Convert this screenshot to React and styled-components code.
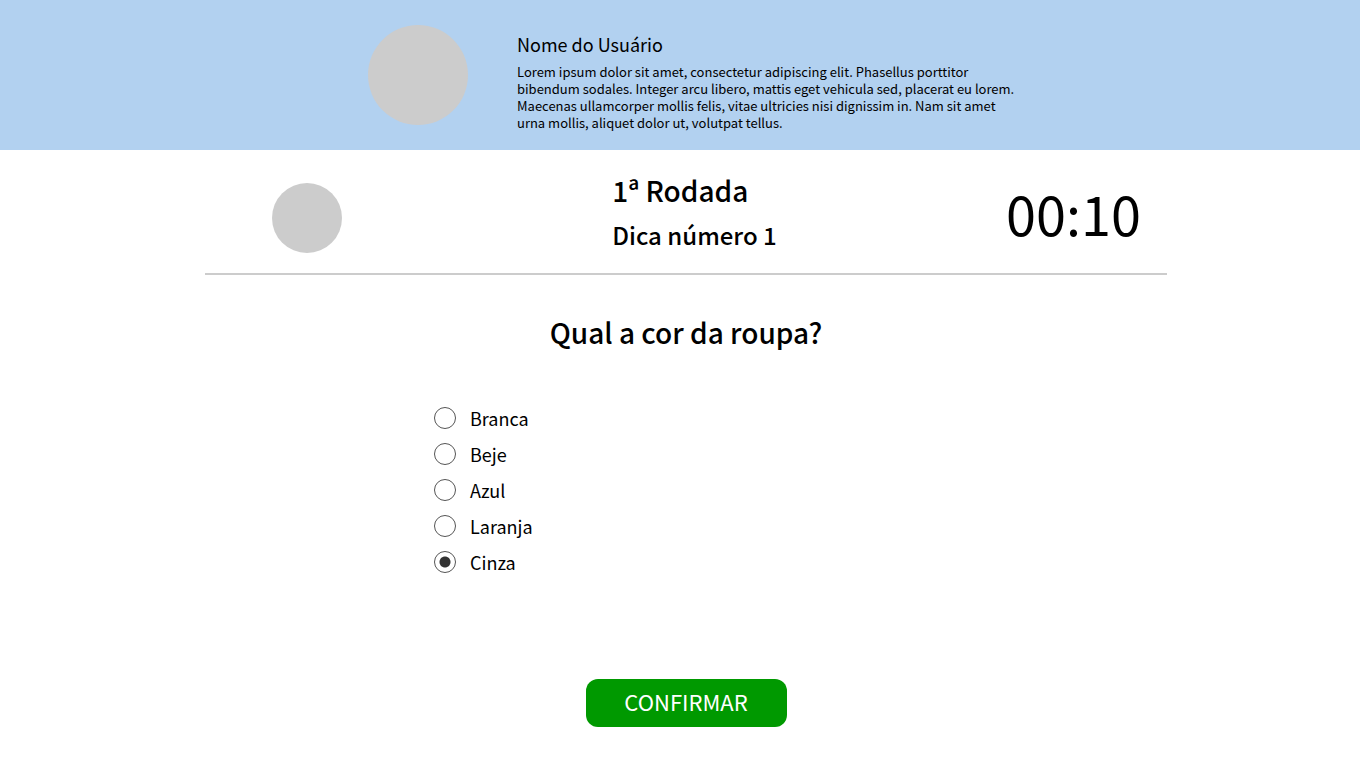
import React, { useState } from "react";
import styled, { createGlobalStyle } from "styled-components";

const GlobalStyle = createGlobalStyle`
  *, *::before, *::after { box-sizing: border-box; }
  body {
    margin: 0;
    background: #fff;
    color: #000;
    font-family: "Noto Sans CJK JP", "Noto Sans", sans-serif;
  }
  h1, h2, p, fieldset { margin: 0; padding: 0; border: 0; }
`;

const Header = styled.header`
  min-height: 150px;
  padding: 25px 0 0 36px;
  background: #b2d1f0;
`;

const Profile = styled.div`
  display: flex;
  gap: 49px;
  max-width: 660px;
  margin: 0 auto;
`;

const Avatar = styled.div`
  flex: none;
  width: ${(p) => p.$size}px;
  height: ${(p) => p.$size}px;
  border-radius: 50%;
  background: #ccc;
`;

const UserInfo = styled.div`
  flex: 1;
  padding-top: 7px;
`;

const UserName = styled.h2`
  font-size: 18px;
  font-weight: 400;
  line-height: 24px;
`;

const Bio = styled.p`
  margin-top: 7px;
  font-size: 13px;
  line-height: 17px;
`;

const Main = styled.main`
  padding-left: 12px;
`;

const Content = styled.form`
  display: flex;
  flex-direction: column;
  max-width: 962px;
  margin: 0 auto;
`;

const StatusBar = styled.div`
  display: grid;
  grid-template-columns: 1fr auto 1fr;
  align-items: end;
  padding: 22px 26px 20px 67px;
  border-bottom: 2px solid #ccc;
`;

const Round = styled.div`
  display: flex;
  flex-direction: column;
  gap: 9px;
  padding-right: 24px;
`;

const RoundTitle = styled.h1`
  font-size: 28px;
  font-weight: 500;
  line-height: 36px;
`;

const Hint = styled.p`
  font-size: 24px;
  font-weight: 500;
  line-height: 36px;
`;

const Timer = styled.time`
  justify-self: end;
  font-size: 54px;
  line-height: 80px;
`;

const Question = styled.h2`
  margin-top: 36px;
  font-size: 28px;
  font-weight: 500;
  line-height: 42px;
  text-align: center;
`;

const Options = styled.fieldset`
  display: flex;
  flex-direction: column;
  align-items: flex-start;
  margin: 47px 0 0 229px;
`;

const Option = styled.label`
  display: flex;
  align-items: center;
  gap: 14px;
  font-size: 18px;
  line-height: 36px;
  cursor: pointer;
`;

const Radio = styled.input`
  appearance: none;
  width: 22px;
  height: 22px;
  margin: 0;
  border: 1px solid #555;
  border-radius: 50%;
  background: #fff;

  &:checked {
    background: radial-gradient(circle, #333 5px, #fff 6px);
  }
`;

const ConfirmButton = styled.button`
  align-self: center;
  width: 201px;
  height: 48px;
  margin-top: 99px;
  padding: 0 0 4px;
  border: 0;
  border-radius: 12px;
  background: #090;
  color: #fff;
  font-family: inherit;
  font-size: 22px;
  line-height: 44px;
  cursor: pointer;
`;

const colors = ["Branca", "Beje", "Azul", "Laranja", "Cinza"];

export default function App() {
  const [answer, setAnswer] = useState("Cinza");

  return (
    <>
      <GlobalStyle />
      <Header>
        <Profile>
          <Avatar $size={100} />
          <UserInfo>
            <UserName>Nome do Usuário</UserName>
            <Bio>
              Lorem ipsum dolor sit amet, consectetur adipiscing elit. Phasellus porttitor
              <br />
              bibendum sodales. Integer arcu libero, mattis eget vehicula sed, placerat eu lorem.
              <br />
              Maecenas ullamcorper mollis felis, vitae ultricies nisi dignissim in. Nam sit amet
              <br />
              urna mollis, aliquet dolor ut, volutpat tellus.
            </Bio>
          </UserInfo>
        </Profile>
      </Header>
      <Main>
        <Content onSubmit={(e) => e.preventDefault()}>
          <StatusBar>
            <Avatar $size={70} />
            <Round>
              <RoundTitle>1ª Rodada</RoundTitle>
              <Hint>Dica número 1</Hint>
            </Round>
            <Timer>00:10</Timer>
          </StatusBar>
          <Question id="question">Qual a cor da roupa?</Question>
          <Options aria-labelledby="question">
            {colors.map((color) => (
              <Option key={color}>
                <Radio
                  type="radio"
                  name="color"
                  value={color}
                  checked={answer === color}
                  onChange={() => setAnswer(color)}
                />
                {color}
              </Option>
            ))}
          </Options>
          <ConfirmButton type="submit">CONFIRMAR</ConfirmButton>
        </Content>
      </Main>
    </>
  );
}
